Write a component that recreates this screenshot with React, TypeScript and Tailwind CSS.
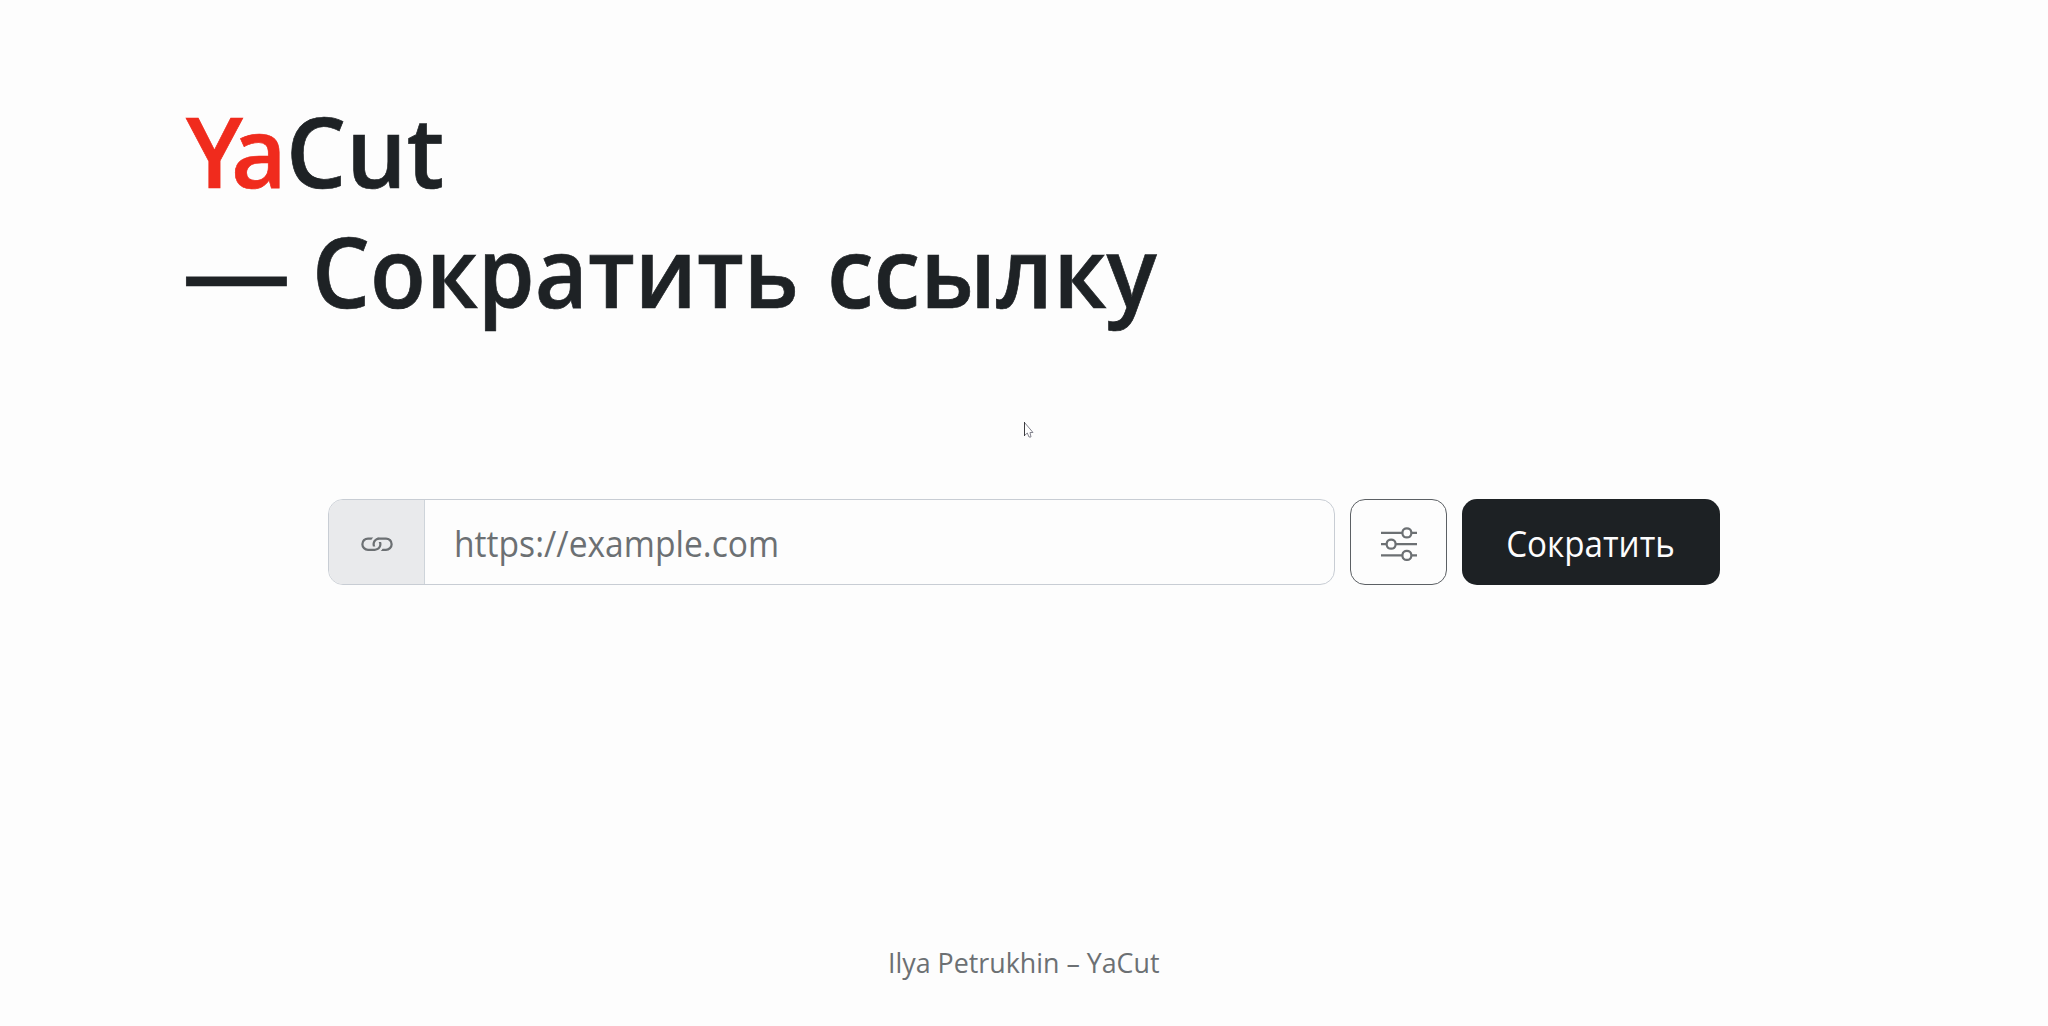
import { BsLink, BsSliders } from "react-icons/bs";

function Heading() {
  return (
    <h1 className="ml-[186px] pt-[90px] text-[98px] leading-[120px] font-semibold whitespace-nowrap text-[#1e2225] [-webkit-text-stroke:0.7px]">
      <span className="flex">
        <span className="w-[100px] origin-left scale-x-[0.98] tracking-[-12px] text-[#f02b1d]">Ya</span>
        <span className="origin-left scale-x-[0.97]">Cut</span>
      </span>
      <span className="-ml-[4px] flex">
        <span className="w-[130px]">
          <span className="inline-block origin-left scale-x-[1.11]">—</span>
        </span>
        <span className="w-[515px]">
          <span className="inline-block origin-left scale-x-[0.934]">Сократить</span>
        </span>
        <span className="inline-block origin-left scale-x-[0.957]">ссылку</span>
      </span>
    </h1>
  );
}

function LinkForm() {
  return (
    <form className="mt-[169px] ml-[328px] flex h-[86px] w-[1392px] gap-[15px]">
      <div className="flex w-[1007px] shrink-0 overflow-hidden rounded-[15px] border border-[#c8cdd4]">
        <span className="flex w-[96px] shrink-0 items-center justify-center border-r border-[#ced4da] bg-[#e9eaec] text-[#6c7073]">
          <BsLink size={36} className="relative top-px" />
        </span>
        <input
          type="text"
          placeholder="https://example.com"
          className="min-w-0 flex-1 origin-left scale-x-[0.934] bg-transparent pt-[3px] pl-[31px] text-[36px] text-[#212529] outline-none placeholder:text-[#6c7073]"
        />
      </div>
      <button
        type="button"
        className="flex w-[97px] shrink-0 items-center justify-center rounded-[15px] border border-[#5c6064] text-[#6c7073]"
      >
        <BsSliders size={36} className="relative top-px" />
      </button>
      <button
        type="button"
        className="flex flex-1 items-center justify-center rounded-[15px] bg-[#1d2124] pt-[3px] pr-[2px] text-[36px] whitespace-nowrap text-[#fdfdfe]"
      >
        <span className="scale-x-[0.922]">Сократить</span>
      </button>
    </form>
  );
}

function Cursor() {
  return (
    <svg
      className="absolute top-[421px] left-[1023px]"
      width="12"
      height="18"
      viewBox="0 0 12 18"
      fill="#fff"
      strokeLinejoin="round"
    >
      <path d="M1.5 1.5V14.5L4.3 12L6 16H8L7 11.5H10Z" stroke="#85858f" />
      <path d="M1.5 1V15" stroke="#3c3c40" />
    </svg>
  );
}

export default function App() {
  return (
    <div className="relative flex h-[1026px] w-full flex-col overflow-hidden bg-[#fdfdfd] font-['Open_Sans','Noto_Sans',sans-serif]">
      <Heading />
      <LinkForm />
      <footer className="mt-auto mb-[44px] text-center text-[28px] leading-[40px] text-[#6c7073]">
        <span className="inline-block scale-x-[0.957]">Ilya Petrukhin – YaCut</span>
      </footer>
      <Cursor />
    </div>
  );
}
